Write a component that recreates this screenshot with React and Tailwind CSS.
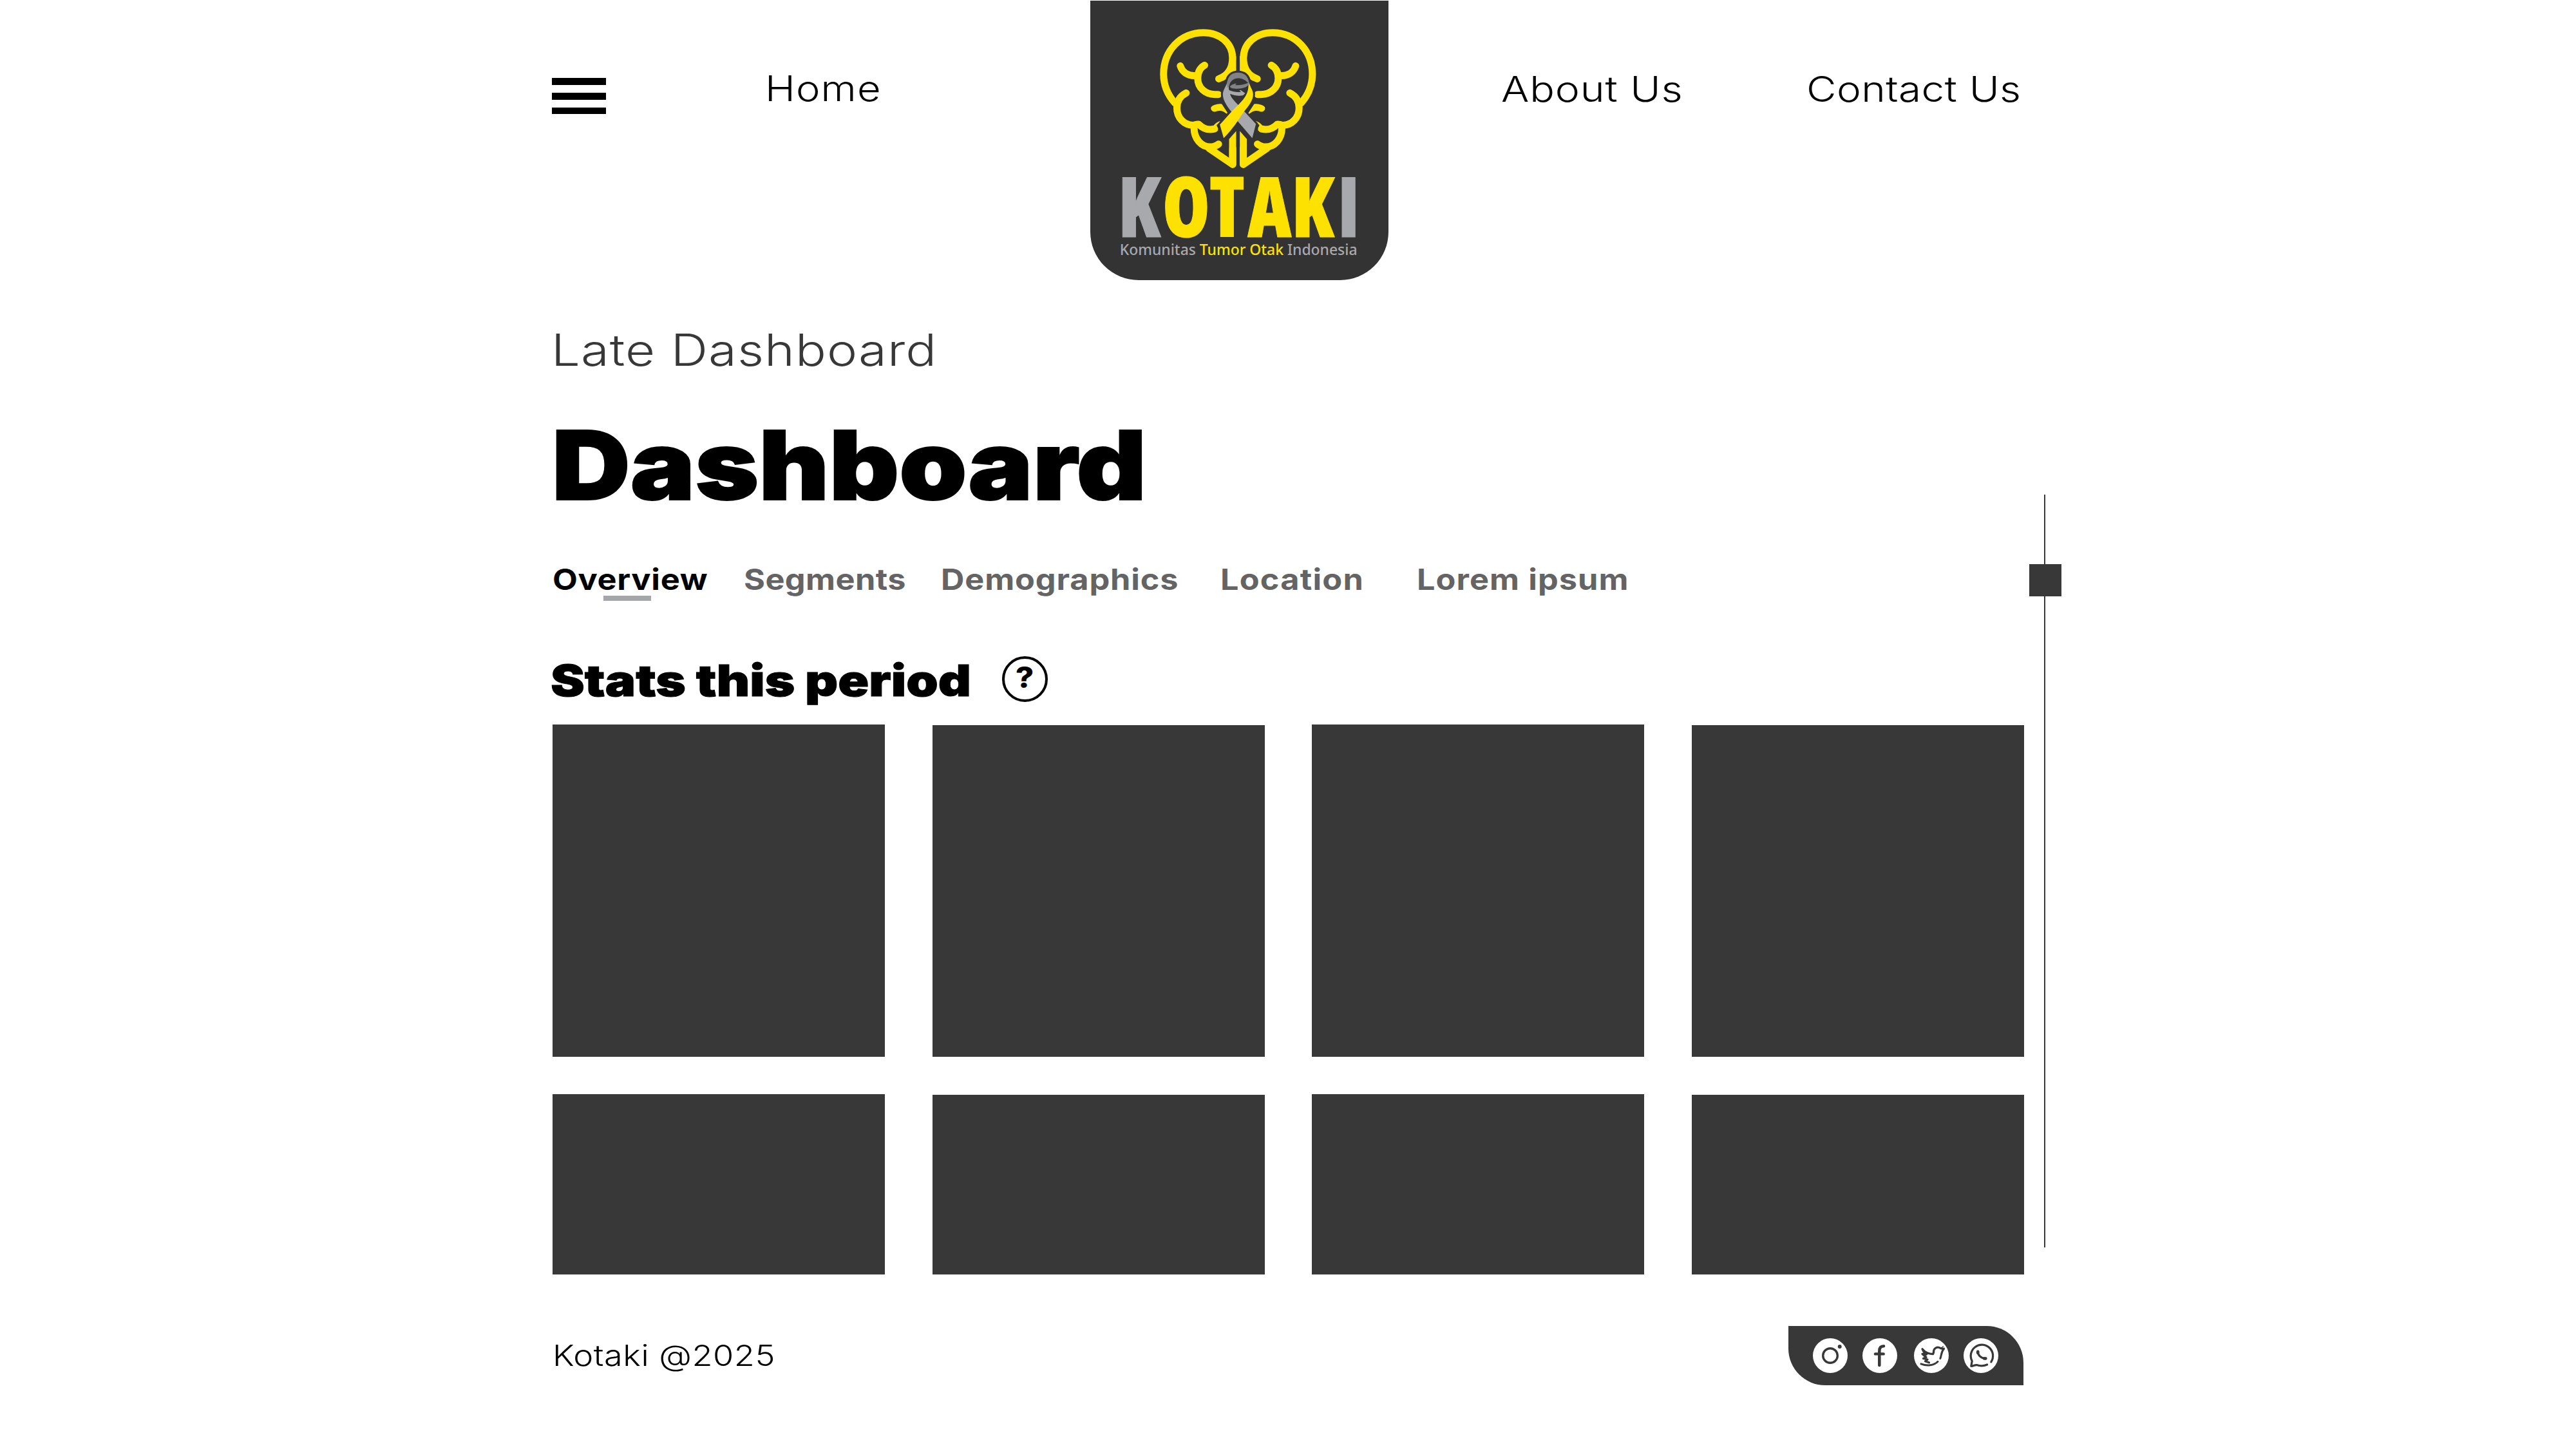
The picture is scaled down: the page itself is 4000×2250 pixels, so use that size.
import React from 'react';

function BrainHalf() {
  return (
    <g>
      <g fill="none" stroke="#fde100" strokeWidth="33" strokeLinecap="round" strokeLinejoin="round">
        <path d="M638 367 C682 352 702 318 702 270 C702 203 645 152 567 152 C458 152 381 238 381 345 C381 398 400 442 434 480" />
        <path d="M459 307 C468 335 492 352 525 352" />
        <path d="M572 304 C548 318 540 340 540 364 C540 408 575 440 620 440 L636 440" />
        <path d="M486 433 C457 448 443 474 443 503 C443 550 478 583 518 583 C528 583 536 577 545 579 C566 600 592 607 618 600" />
        <path d="M523 597 C523 645 556 684 598 684 C614 684 627 679 637 671" />
        <path d="M592 690 L703 766 L703 690" />
      </g>
      <g fill="#fde100">
        <path d="M719 262 V338 H672 C690 320 697 295 700 262Z" />
        <path d="M686 648 L719 610 V768 H686Z" />
        <path d="M617 489 Q634 482 652 484 L680 527 L676 531 Q655 511 630 517 Q612 525 603 512 Q595 497 617 489Z" />
        <path d="M616 582 Q630 567 645 563 Q645 568 628 582 L634 608 L612 614Z" />
      </g>
    </g>
  );
}

function Logo() {
  return (
    <svg viewBox="40 3 1388 1300" className="block h-full w-full" role="img" aria-label="Kotaki">
      <BrainHalf />
      <g transform="translate(1455 0) scale(-1 1)">
        <BrainHalf />
      </g>
      <path
        d="M676 385 C680 352 700 338 727 338 C757 338 775 355 780 385 C788 405 798 420 798 438 C798 465 780 490 757 520 L811 577 L794 643 L727 560 L661 643 L643 580 L697 517 C675 490 657 465 657 438 C657 422 668 405 676 385Z"
        fill="#333333"
        stroke="#333333"
        strokeWidth="18"
      />
      <path
        d="M678 383 C668 408 657 422 657 440 C657 468 680 500 697 520 L727 565 L794 643 L811 577 L757 519 L722 482 C704 462 693 450 691 437 C712 446 735 448 752 444 L761 434 L752 428 L741 420 L733 421 L742 428 C722 431 704 427 686 420 C682 405 686 392 692 380Z"
        fill="#a7a9ac"
      />
      <path
        d="M676 388 C681 352 700 338 727 338 C757 338 775 354 780 388 C775 402 757 411 735 412 C718 413 703 414 693 408 L690 402 L700 394 L716 388 L720 393 L712 396 C735 399 755 394 774 386 C764 372 746 364 728 364 C704 365 690 379 685 404 L678 408Z"
        fill="#808285"
      />
      <path
        d="M779 385 C785 407 798 420 798 440 C798 466 780 490 757 518 C748 530 738 546 727 562 C708 590 686 617 661 643 L643 580 C665 557 680 538 700 517 C735 480 775 452 776 400Z"
        fill="#fde100"
      />
      <g
        transform="scale(0.92 1)"
        fontFamily='"Open Sans", sans-serif'
        fontWeight="800"
        fontSize="387"
        style={{ fontStretch: '75%' }}
      >
        <text x="184 408 646 839 1063 1295" y="1104" fill="#fde100" stroke="#fde100" strokeWidth="3">
          <tspan fill="#a7a9ac" stroke="#a7a9ac">K</tspan>
          <tspan>OTAK</tspan>
          <tspan fill="#a7a9ac" stroke="#a7a9ac">I</tspan>
        </text>
      </g>
      <text
        x="177"
        y="1188"
        fontFamily='"Noto Sans", sans-serif'
        fontSize="70"
        fontWeight="500"
        textLength="1106"
        lengthAdjust="spacingAndGlyphs"
        fill="#a7a9ac"
      >
        Komunitas <tspan fill="#fde100">Tumor Otak</tspan> Indonesia
      </text>
    </svg>
  );
}

const stroke = { fill: 'none', stroke: '#383838', strokeLinecap: 'round', strokeLinejoin: 'round' };

function Social({ label, children }) {
  return (
    <a aria-label={label} className="block size-[54px] rounded-full bg-white">
      <svg viewBox="0 0 54 54" className="block size-full">
        {children}
      </svg>
    </a>
  );
}

function Card({ className }) {
  return <div className={`w-[516px] bg-[#383838] ${className}`} />;
}

function CardColumn({ className = '' }) {
  return (
    <div className={`flex flex-col gap-[58.8px] ${className}`}>
      <Card className="h-[516px]" />
      <Card className="h-[279.3px]" />
    </div>
  );
}

export default function App() {
  return (
    <div className="h-[2250px] w-[4000px] overflow-hidden bg-white font-['Inter',sans-serif] text-black">
      <header className="flex h-[435px] items-start pl-[857px] text-[55px] leading-[40px] font-light whitespace-nowrap">
        <button aria-label="Menu" className="mt-[121px] flex w-[84px] flex-col gap-[12px]">
          <span className="h-[10.8px] w-full bg-black" />
          <span className="h-[10.8px] w-full bg-black" />
          <span className="h-[10.8px] w-full bg-black" />
        </button>
        <a className="mt-[117px] ml-[247px] w-[180px]">
          <span className="inline-block origin-left scale-x-[1.15] tracking-[1px]">Home</span>
        </a>
        <div className="mt-px ml-[325px] h-[433.5px] w-[463px] rounded-b-[75px] bg-[#333333]">
          <Logo />
        </div>
        <a className="mt-[118px] ml-[175px] w-[300px]">
          <span className="inline-block origin-left scale-x-[1.17] tracking-[0.7px]">About Us</span>
        </a>
        <a className="mt-[118px] ml-[174px] w-[340px]">
          <span className="inline-block origin-left scale-x-[1.16] tracking-[0.4px]">Contact Us</span>
        </a>
      </header>

      <div className="flex items-start pl-[855px]">
        <main className="w-[2296px] whitespace-nowrap">
          <p className="mt-[84px] ml-px h-[49px] text-[68px] leading-[49px] [font-weight:260] text-[#383838]">
            <span className="inline-block origin-left scale-x-[1.17] tracking-[0.95px]">Late Dashboard</span>
          </p>
          <h1 className="mt-[101px] ml-[2px] h-[108px] text-[148px] leading-[107px] font-black [-webkit-text-stroke:2px_black]">
            <span className="inline-block origin-left scale-x-[1.138]">Dashboard</span>
          </h1>

          <nav className="mt-[106px] ml-[3px] flex h-[33px] text-[45px] leading-[33px] font-bold text-[#646464]">
            <a className="relative w-[296.5px] text-black">
              <span className="inline-block origin-left scale-x-[1.12] tracking-[0.64px]">Overview</span>
              <span className="absolute top-[41.5px] left-[79px] h-[8.8px] w-[73.5px] bg-[#a5a6aa]" />
            </a>
            <a className="w-[306.5px]">
              <span className="inline-block origin-left scale-x-[1.12] tracking-[0.37px]">Segments</span>
            </a>
            <a className="w-[434px]">
              <span className="inline-block origin-left scale-x-[1.12] tracking-[0.78px]">Demographics</span>
            </a>
            <a className="w-[305px]">
              <span className="inline-block origin-left scale-x-[1.12] tracking-[1.1px]">Location</span>
            </a>
            <a>
              <span className="inline-block origin-left scale-x-[1.12] tracking-[0.97px]">Lorem ipsum</span>
            </a>
          </nav>

          <div className="mt-[103px] flex h-[71px] items-start">
            <h2 className="mt-[12.5px] w-[701px] text-[67px] leading-[49px] font-black [-webkit-text-stroke:1px_black]">
              <span className="inline-block origin-left scale-x-[1.183]">Stats this period</span>
            </h2>
            <span className="flex size-[71px] items-start justify-center rounded-full border-4 border-black pt-[12px] text-[45px] leading-[33px] font-extrabold">
              <span className="inline-block scale-x-[1.1]">?</span>
            </span>
          </div>

          <div className="mt-[34.5px] ml-[3px] flex h-[854.1px] gap-[73.6px]">
            <CardColumn />
            <CardColumn className="mt-[1.5px]" />
            <CardColumn />
            <CardColumn className="mt-[1.5px]" />
          </div>

          <footer className="mt-[80.4px] ml-[3px] flex h-[92.5px] w-[2284px] items-start justify-between">
            <p className="mt-[29px] text-[45px] leading-[33px] font-light">
              <span className="inline-block origin-left scale-x-[1.16] tracking-[0.45px]">Kotaki @2025</span>
            </p>
            <div className="flex h-full w-[365px] items-center rounded-tr-[57px] rounded-bl-[57px] bg-[#383838] pl-[38px]">
              <Social label="Instagram">
                <circle cx="27" cy="27" r="11.3" {...stroke} strokeWidth="3.4" />
                <circle cx="41.7" cy="13" r="3" fill="#383838" />
              </Social>
              <div className="ml-[23px]">
                <Social label="Facebook">
                  <path d="M33 12.3 C28 12.3 26.3 15.5 26.3 20 V42" {...stroke} strokeWidth="4.6" />
                  <path d="M20 24.4 H32.7" {...stroke} strokeWidth="4.4" />
                </Social>
              </div>
              <div className="ml-[26px]">
                <Social label="Twitter">
                  <path
                    d="M46 16.6 L41.5 15.6 C36 12.2 30 15.5 30.6 22 L29.5 24.6 C23 24.5 17 22 13 16.8 L15.6 21.6 L19.5 25 L13 24.5 L19 29.5 L14.5 31.5 L21 33 L17.5 35.8 L23.5 37.8"
                    {...stroke}
                    strokeWidth="3.3"
                  />
                  <path d="M11 39.8 C20 43.6 31 42.5 37 36.3" {...stroke} strokeWidth="3" />
                  <path d="M40.8 31.5 C42.8 27 41.8 22 46.5 16" {...stroke} strokeWidth="3" />
                  <path d="M42 15.4 L45.5 12.8" {...stroke} strokeWidth="1.4" />
                </Social>
              </div>
              <div className="ml-[23px]">
                <Social label="WhatsApp">
                  <path
                    d="M42.8 36.8 A17.2 17.2 0 1 0 13.2 35.4 L11.8 43.4 C16 43.4 17 41 20.5 41.6 C26 43.6 31 43.6 36.6 41"
                    {...stroke}
                    strokeWidth="3.2"
                  />
                  <path d="M22 20.6 C22.4 26.5 27 31.2 34 31.6" {...stroke} strokeWidth="3.2" />
                  <ellipse cx="22.2" cy="21.8" rx="2.4" ry="3.4" fill="#383838" />
                  <ellipse cx="33.2" cy="31.4" rx="3.4" ry="2.4" fill="#383838" />
                </Social>
              </div>
            </div>
          </footer>
        </main>

        <aside className="mt-[333px] flex w-[50px] flex-col items-start">
          <div className="ml-[23px] h-[108px] w-[2px] bg-[#383838]" />
          <div className="h-[50px] w-full bg-[#383838]" />
          <div className="ml-[23px] h-[1011px] w-[2px] bg-[#383838]" />
        </aside>
      </div>
    </div>
  );
}
